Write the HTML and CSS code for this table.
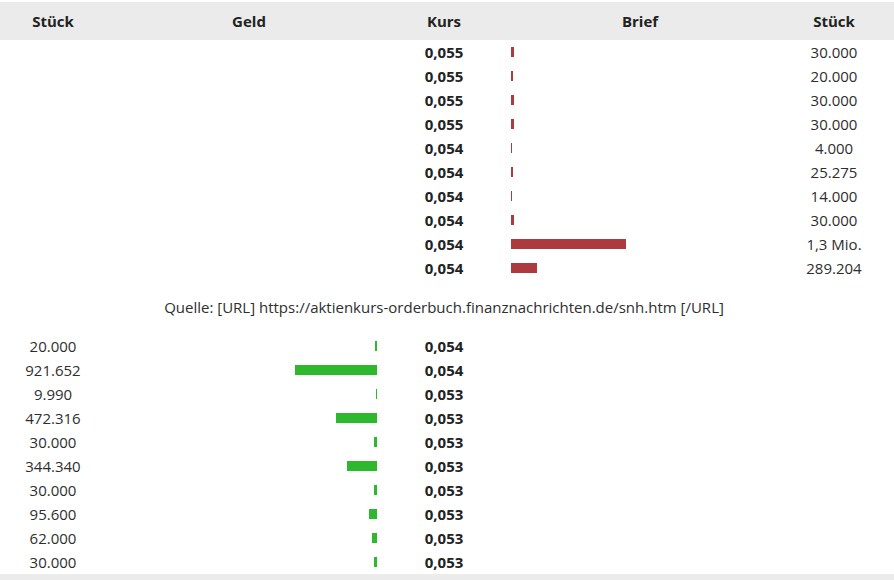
FILE: index.html
```html
<!DOCTYPE html>
<html lang="de">
<head>
<meta charset="utf-8">
<link rel="stylesheet" href="styles.css">
</head>
<body>
<div class="book">
  <div class="row head">
    <div class="c1">Stück</div>
    <div class="c2 center">Geld</div>
    <div class="c3">Kurs</div>
    <div class="c4 center">Brief</div>
    <div class="c5">Stück</div>
  </div>

  <div class="row"><div class="c1"></div><div class="c2"></div><div class="c3 kurs">0,055</div><div class="c4"><span class="bar ask" style="width:2.6px"></span></div><div class="c5">30.000</div></div>
  <div class="row"><div class="c1"></div><div class="c2"></div><div class="c3 kurs">0,055</div><div class="c4"><span class="bar ask" style="width:1.8px"></span></div><div class="c5">20.000</div></div>
  <div class="row"><div class="c1"></div><div class="c2"></div><div class="c3 kurs">0,055</div><div class="c4"><span class="bar ask" style="width:2.6px"></span></div><div class="c5">30.000</div></div>
  <div class="row"><div class="c1"></div><div class="c2"></div><div class="c3 kurs">0,055</div><div class="c4"><span class="bar ask" style="width:2.6px"></span></div><div class="c5">30.000</div></div>
  <div class="row"><div class="c1"></div><div class="c2"></div><div class="c3 kurs">0,054</div><div class="c4"><span class="bar ask" style="width:0.35px"></span></div><div class="c5">4.000</div></div>
  <div class="row"><div class="c1"></div><div class="c2"></div><div class="c3 kurs">0,054</div><div class="c4"><span class="bar ask" style="width:2.2px"></span></div><div class="c5">25.275</div></div>
  <div class="row"><div class="c1"></div><div class="c2"></div><div class="c3 kurs">0,054</div><div class="c4"><span class="bar ask" style="width:1.2px"></span></div><div class="c5">14.000</div></div>
  <div class="row"><div class="c1"></div><div class="c2"></div><div class="c3 kurs">0,054</div><div class="c4"><span class="bar ask" style="width:2.6px"></span></div><div class="c5">30.000</div></div>
  <div class="row"><div class="c1"></div><div class="c2"></div><div class="c3 kurs">0,054</div><div class="c4"><span class="bar ask" style="width:115px"></span></div><div class="c5">1,3 Mio.</div></div>
  <div class="row"><div class="c1"></div><div class="c2"></div><div class="c3 kurs">0,054</div><div class="c4"><span class="bar ask" style="width:25.6px"></span></div><div class="c5">289.204</div></div>

  <div class="source">Quelle: [URL] https://aktienkurs-orderbuch.finanznachrichten.de/snh.htm [/URL]</div>

  <div class="row"><div class="c1">20.000</div><div class="c2 bid"><span class="bar buy" style="width:1.8px"></span></div><div class="c3 kurs">0,054</div><div class="c4"></div><div class="c5"></div></div>
  <div class="row"><div class="c1">921.652</div><div class="c2 bid"><span class="bar buy" style="width:81.6px"></span></div><div class="c3 kurs">0,054</div><div class="c4"></div><div class="c5"></div></div>
  <div class="row"><div class="c1">9.990</div><div class="c2 bid"><span class="bar buy" style="width:0.9px"></span></div><div class="c3 kurs">0,053</div><div class="c4"></div><div class="c5"></div></div>
  <div class="row"><div class="c1">472.316</div><div class="c2 bid"><span class="bar buy" style="width:41.5px"></span></div><div class="c3 kurs">0,053</div><div class="c4"></div><div class="c5"></div></div>
  <div class="row"><div class="c1">30.000</div><div class="c2 bid"><span class="bar buy" style="width:2.7px"></span></div><div class="c3 kurs">0,053</div><div class="c4"></div><div class="c5"></div></div>
  <div class="row"><div class="c1">344.340</div><div class="c2 bid"><span class="bar buy" style="width:30.3px"></span></div><div class="c3 kurs">0,053</div><div class="c4"></div><div class="c5"></div></div>
  <div class="row"><div class="c1">30.000</div><div class="c2 bid"><span class="bar buy" style="width:2.7px"></span></div><div class="c3 kurs">0,053</div><div class="c4"></div><div class="c5"></div></div>
  <div class="row"><div class="c1">95.600</div><div class="c2 bid"><span class="bar buy" style="width:8.5px"></span></div><div class="c3 kurs">0,053</div><div class="c4"></div><div class="c5"></div></div>
  <div class="row"><div class="c1">62.000</div><div class="c2 bid"><span class="bar buy" style="width:5.5px"></span></div><div class="c3 kurs">0,053</div><div class="c4"></div><div class="c5"></div></div>
  <div class="row"><div class="c1">30.000</div><div class="c2 bid"><span class="bar buy" style="width:2.7px"></span></div><div class="c3 kurs">0,053</div><div class="c4"></div><div class="c5"></div></div>

  <div class="foot"></div>
</div>
</body>
</html>
```

FILE: styles.css
```css
html, body {
  margin: 0;
  padding: 0;
  background: #ffffff;
}

body {
  font-family: "Open Sans", "Liberation Sans", sans-serif;
  font-size: 15px;
  color: #2e2e2e;
}

.book {
  padding-top: 2px;
}

.row {
  display: grid;
  grid-template-columns: 106px 286px 104px 288px 1fr;
  height: 24px;
  align-items: center;
}

.row > div {
  display: flex;
  align-items: center;
  height: 24px;
  line-height: 24px;
}

.c1, .c3, .c5 {
  justify-content: center;
}

.c5 {
  padding-right: 10px;
}

.c4 {
  padding-left: 15px;
}

.c2.bid {
  justify-content: flex-end;
  padding-right: 15px;
}

.center {
  justify-content: center;
}

.head {
  height: 38px;
  background: #ebebeb;
  font-weight: 700;
  color: #222222;
}

.head > div {
  height: 38px;
  line-height: 38px;
}

.head > .c4 {
  padding-left: 0;
}

.kurs {
  font-weight: 700;
  color: #222222;
}

.bar {
  display: block;
  height: 10px;
}

.ask {
  background: #ad3a3c;
}

.buy {
  background: #2db82d;
}

.source {
  height: 54px;
  display: flex;
  align-items: center;
  justify-content: center;
  padding-right: 6px;
  font-size: 15px;
  color: #2e2e2e;
}

.foot {
  height: 8px;
  background: #ebebeb;
}
```
